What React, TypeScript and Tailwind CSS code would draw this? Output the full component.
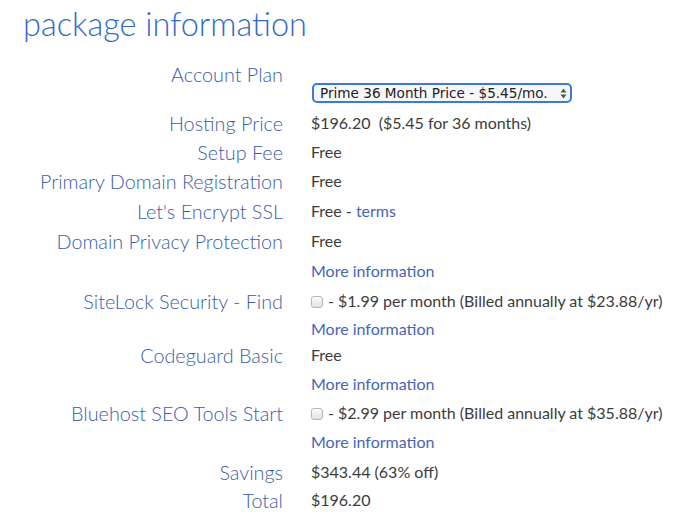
import React from 'react'

type Row = { label?: string; h: string; value: React.ReactNode }

const more = <span className="text-[16px] text-[#4764bb]">More information</span>

function Check() {
  return (
    <span className="inline-block w-[12px] h-[12px] rounded-[3px] border border-[#b5b5b5] bg-gradient-to-b from-[#fbfbfb] to-[#e3e3e3] mr-[5px] translate-y-[1px]" />
  )
}

const rows: Row[] = [
  { label: 'Hosting Price', h: 'h-[29px]', value: <span>$196.20&nbsp; ($5.45 for 36 months)</span> },
  { label: 'Setup Fee', h: 'h-[29px]', value: 'Free' },
  { label: 'Primary Domain Registration', h: 'h-[30px]', value: 'Free' },
  { label: "Let's Encrypt SSL", h: 'h-[30px]', value: <span>Free - <span className="text-[#4764bb]">terms</span></span> },
  { label: 'Domain Privacy Protection', h: 'h-[30px]', value: 'Free' },
  { h: 'h-[30px]', value: more },
  { label: 'SiteLock Security - Find', h: 'h-[29px]', value: <span className="flex items-center"><Check />- $1.99 per month (Billed annually at $23.88/yr)</span> },
  { h: 'h-[27px]', value: more },
  { label: 'Codeguard Basic', h: 'h-[26px]', value: 'Free' },
  { h: 'h-[32px]', value: more },
  { label: 'Bluehost SEO Tools Start', h: 'h-[26px]', value: <span className="flex items-center"><Check />- $2.99 per month (Billed annually at $35.88/yr)</span> },
  { h: 'h-[31px]', value: more },
  { label: 'Savings', h: 'h-[29px]', value: '$343.44 (63% off)' },
  { label: 'Total', h: 'h-[28px]', value: '$196.20' },
]

export default function App() {
  return (
    <div className="w-[700px] h-[525px] bg-white overflow-hidden" style={{ fontFamily: 'Lato, "Open Sans", sans-serif' }}>
      <div className="h-[62px] pl-[23px] pt-[2px]">
        <h1 className="text-[32.5px] font-light leading-[44px] text-[#2f6acb]">package information</h1>
      </div>

      <div className="flex h-[46px]">
        <div className="w-[283px] text-right text-[19.8px] font-light leading-[24px] text-[#3a5da8]">Account Plan</div>
        <div className="pl-[29px] pt-[21px]">
          <div className="flex items-center justify-between w-[260px] h-[20px] rounded-[5px] border-2 border-[#3b7ad9] bg-[#f7f7f7] pl-[6px] pr-[3px] text-[13.6px] text-[#222]" style={{ fontFamily: '"DejaVu Sans", Verdana, sans-serif' }}>
            <span className="leading-[16px]">Prime 36 Month Price - $5.45/mo.</span>
            <svg width="7" height="11" viewBox="0 0 7 11" className="shrink-0">
              <path d="M3.5 0.5 L6.5 4.5 L0.5 4.5 Z" fill="#555" />
              <path d="M3.5 10.5 L6.5 6.5 L0.5 6.5 Z" fill="#555" />
            </svg>
          </div>
        </div>
      </div>

      {rows.map((r, i) => (
        <div key={i} className={`flex items-center ${r.h}`}>
          <div className="w-[283px] text-right text-[19.8px] font-light leading-[24px] text-[#3a5da8]">{r.label}</div>
          <div className="pl-[28px] text-[16px] text-[#3c3c3c] leading-[22px]">{r.value}</div>
        </div>
      ))}
    </div>
  )
}
